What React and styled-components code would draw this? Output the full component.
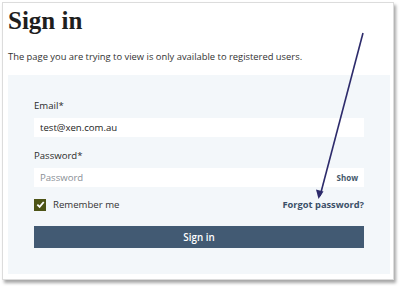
import React from "react";
import styled, { createGlobalStyle } from "styled-components";

const GlobalStyle = createGlobalStyle`
  html, body {
    margin: 0;
    padding: 0;
    background: #ffffff;
  }
  body {
    font-family: "Open Sans", "Liberation Sans", sans-serif;
    color: #333333;
  }
`;

const Page = styled.div`
  position: relative;
  width: 400px;
  height: 286px;
  padding: 2px 6px 6px 2px;
  box-sizing: border-box;
`;

const Card = styled.div`
  height: 100%;
  box-sizing: border-box;
  background: #ffffff;
  border: 1px solid #dcdcdc;
  box-shadow: 2px 3px 3px rgba(0, 0, 0, 0.35);
  padding: 3px 3px 0 5px;
`;

const Title = styled.h1`
  margin: 0;
  font-family: "Liberation Serif", "DejaVu Serif", serif;
  font-weight: 700;
  font-size: 25px;
  line-height: 30px;
  color: #1e1e1e;
`;

const Intro = styled.p`
  margin: 15px 0 12px 0;
  font-size: 9.4px;
  line-height: 12px;
  color: #333333;
`;

const Panel = styled.div`
  background: #f3f7fa;
  padding: 25px 26px 26px 26px;
  display: flex;
  flex-direction: column;
`;

const Field = styled.div`
  display: flex;
  flex-direction: column;
  gap: 6px;
  margin-bottom: ${(p) => p.$gap || 0}px;
`;

const Label = styled.label`
  font-size: 9.6px;
  line-height: 12px;
  color: #2b2b2b;
`;

const InputBox = styled.div`
  display: flex;
  align-items: center;
  height: 19px;
  background: #ffffff;
  padding: 0 6px;
`;

const Input = styled.input`
  flex: 1;
  border: none;
  outline: none;
  background: transparent;
  padding: 0;
  font-family: inherit;
  font-size: 9.6px;
  color: #222222;
  &::placeholder {
    color: #8a8f96;
  }
`;

const ShowButton = styled.span`
  font-size: 8px;
  font-weight: 700;
  color: #44576a;
`;

const OptionsRow = styled.div`
  display: flex;
  align-items: center;
  justify-content: space-between;
  margin: 11px 0 15px 0;
`;

const Remember = styled.label`
  display: flex;
  align-items: center;
  gap: 7px;
  font-size: 9.6px;
  color: #333333;
`;

const Check = styled.span`
  width: 12px;
  height: 12px;
  background: #4d5416;
  display: flex;
  align-items: center;
  justify-content: center;
`;

const Forgot = styled.a`
  font-size: 9.3px;
  font-weight: 700;
  color: #3b5068;
  text-decoration: none;
`;

const SubmitButton = styled.button`
  height: 22px;
  border: none;
  background: #425a73;
  color: #ffffff;
  font-family: inherit;
  font-size: 9.8px;
  font-weight: 600;
`;

const Annotation = styled.svg`
  position: absolute;
  left: 0;
  top: 0;
  pointer-events: none;
`;

export default function App() {
  return (
    <>
      <GlobalStyle />
      <Page>
        <Card>
          <Title>Sign in</Title>
          <Intro>
            The page you are trying to view is only available to registered
            users.
          </Intro>
          <Panel>
            <Field $gap={13}>
              <Label>Email*</Label>
              <InputBox>
                <Input defaultValue="test@xen.com.au" />
              </InputBox>
            </Field>
            <Field>
              <Label>Password*</Label>
              <InputBox>
                <Input type="password" placeholder="Password" />
                <ShowButton>Show</ShowButton>
              </InputBox>
            </Field>
            <OptionsRow>
              <Remember>
                <Check>
                  <svg width="9" height="9" viewBox="0 0 10 10">
                    <path
                      d="M1.5 5.2 L4 7.6 L8.6 2.2"
                      fill="none"
                      stroke="#ffffff"
                      strokeWidth="2"
                    />
                  </svg>
                </Check>
                Remember me
              </Remember>
              <Forgot href="#">Forgot password?</Forgot>
            </OptionsRow>
            <SubmitButton>Sign in</SubmitButton>
          </Panel>
        </Card>
        <Annotation width="400" height="286" viewBox="0 0 400 286">
          <line
            x1="363"
            y1="33"
            x2="320"
            y2="196"
            stroke="#2d2b6b"
            strokeWidth="1.6"
          />
          <path d="M318.5 199 L316 189.5 L323.5 191.5 Z" fill="#2d2b6b" />
        </Annotation>
      </Page>
    </>
  );
}
